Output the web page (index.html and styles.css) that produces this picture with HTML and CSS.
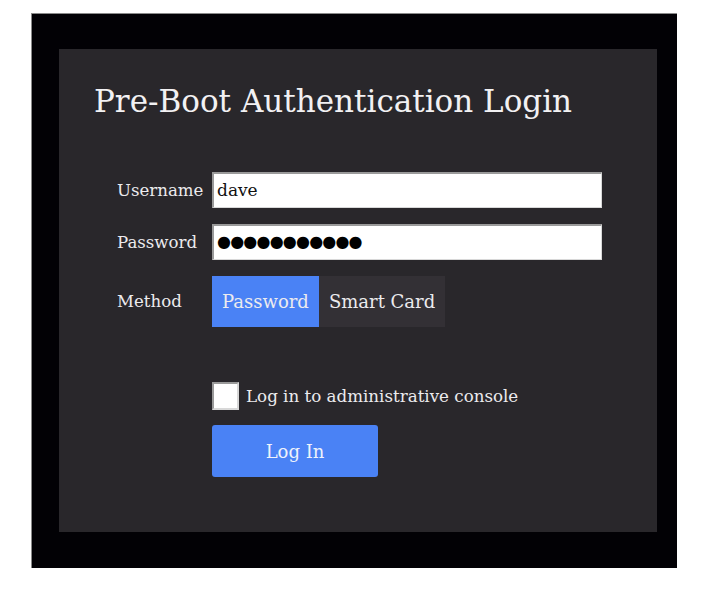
FILE: index.html
```html
<!DOCTYPE html>
<html>
<head>
<meta charset="utf-8">
<link rel="stylesheet" href="styles.css">
</head>
<body>
<div class="frame">
  <div class="panel">
    <h1 class="title">Pre-Boot Authentication Login</h1>
    <div class="form">
      <div class="label">Username</div>
      <div class="field">dave</div>
      <div class="label">Password</div>
      <div class="field dots">●●●●●●●●●●●</div>
      <div class="label">Method</div>
      <div class="methods">
        <div class="method active">Password</div>
        <div class="method">Smart Card</div>
      </div>
    </div>
    <div class="extra">
      <label class="check"><span class="box"></span><span>Log in to administrative console</span></label>
      <button class="login">Log In</button>
    </div>
  </div>
</div>
</body>
</html>
```
FILE: styles.css
```css
html, body {
  margin: 0;
  background: #ffffff;
}
body {
  font-family: "DejaVu Serif", serif;
  color: #ecebee;
}
.frame {
  margin: 13px 0 0 31px;
  background: #020105;
  border-top: 1px solid #8a8a8a;
  border-left: 1px solid #8a8a8a;
  padding: 35px 20px 36px 27px;
  box-sizing: border-box;
  width: 646px;
  height: 555px;
}
.panel {
  background: #29272b;
  width: 598px;
  height: 483px;
  padding: 34px 0 0 35px;
  box-sizing: border-box;
}
.title {
  margin: 0;
  font-weight: normal;
  font-size: 31px;
  line-height: 36px;
  color: #f2f1f3;
}
.form {
  margin: 53px 0 0 23px;
  display: grid;
  grid-template-columns: 95px 390px;
  grid-template-rows: 36px 36px 51px;
  row-gap: 16px;
  align-items: center;
}
.label {
  font-size: 16.6px;
}
.field {
  height: 36px;
  box-sizing: border-box;
  background: #fff;
  border-top: 2px solid #9a9a9a;
  border-left: 2px solid #9a9a9a;
  border-right: 1px solid #d8d8d8;
  border-bottom: 1px solid #d8d8d8;
  color: #111;
  font-size: 17px;
  line-height: 32px;
  padding-left: 3px;
}
.field.dots {
  font-family: "DejaVu Sans", sans-serif;
  font-size: 16px;
  letter-spacing: -0.8px;
  color: #000;
}
.methods {
  display: flex;
  height: 51px;
}
.method {
  display: flex;
  align-items: center;
  padding: 0 10px;
  font-size: 18px;
  background: #333035;
}
.method.active {
  background: #4a82f5;
}
.extra {
  margin: 55px 0 0 118px;
  display: flex;
  flex-direction: column;
  align-items: flex-start;
  gap: 15px;
}
.check {
  display: flex;
  align-items: center;
  gap: 7px;
  font-size: 16.7px;
}
.box {
  width: 27px;
  height: 28px;
  box-sizing: border-box;
  background: #fff;
  border: 2px solid #9a9a9a;
  border-right-color: #d8d8d8;
  border-bottom-color: #d8d8d8;
}
.login {
  width: 166px;
  height: 52px;
  border: none;
  border-radius: 3px;
  background: #4a82f5;
  color: #eef2fb;
  font-family: "DejaVu Serif", serif;
  font-size: 18px;
}
```
